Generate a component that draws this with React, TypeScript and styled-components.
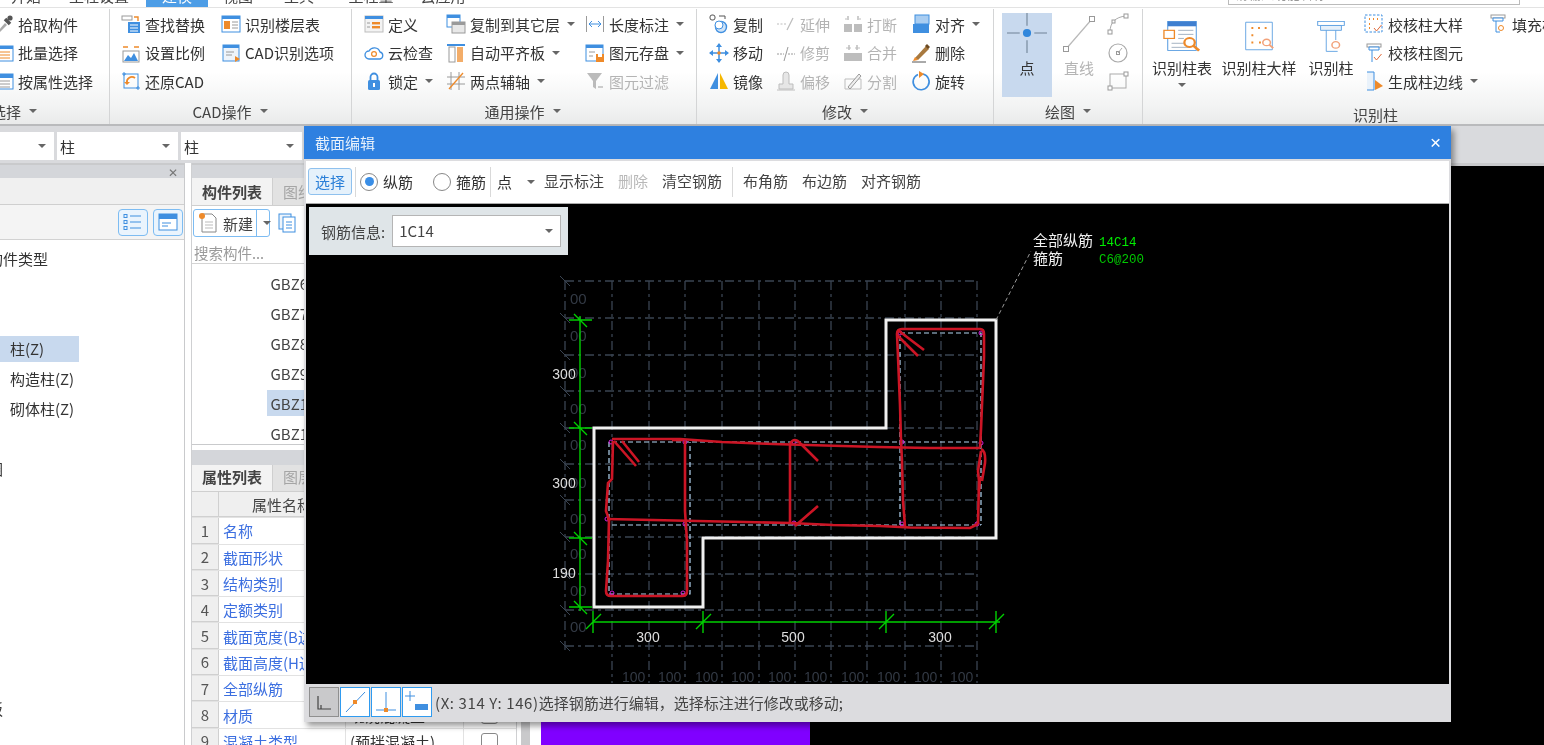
import React from "react";
import styled, { createGlobalStyle } from "styled-components";

const FONT = `"Noto Sans CJK SC", "Noto Sans", sans-serif`;

const Global = createGlobalStyle`
  html, body { margin: 0; padding: 0; background: #fff; }
  body { font-family: ${FONT}; color: #333; }
  * { box-sizing: border-box; }
`;

const Page = styled.div`
  position: relative;
  width: 1544px;
  height: 745px;
  overflow: hidden;
  display: flex;
  flex-direction: column;
  background: #fff;
  font-size: 15px;
  filter: blur(0.35px);
`;

/* ---------- top tab strip ---------- */
const TabStrip = styled.div`
  height: 7px;
  flex: none;
  display: flex;
  overflow: hidden;
  background: #fff;
  position: relative;
`;
const TopTab = styled.div<{ $active?: boolean; $w: number }>`
  width: ${(p) => p.$w}px;
  flex: none;
  text-align: center;
  height: 7px;
  background: ${(p) => (p.$active ? "#4d9de6" : "transparent")};
  color: ${(p) => (p.$active ? "#fff" : "#444")};
  span { display: block; line-height: 20px; margin-top: -14px; }
`;
const TopSearch = styled.div`
  margin-left: auto;
  margin-right: 24px;
  width: 292px;
  height: 5px;
  background: #fff;
  border: 1px solid #bbb;
  border-top: 0;
  color: #999;
  font-size: 13px;
  padding-left: 6px;
  span { display: block; line-height: 20px; margin-top: -16px; }
`;

/* ---------- ribbon ---------- */
const Ribbon = styled.div`
  height: 119px;
  flex: none;
  display: flex;
  background: linear-gradient(#ffffff 55%, #f2f3f3 85%, #e9eaea);
  border-top: 1px solid #e3e3e3;
  border-bottom: 2px solid #b9babc;
`;
const RibbonGroup = styled.div<{ $w: number; $pad: number; $offset?: number; $last?: boolean }>`
  width: ${(p) => p.$w}px;
  flex: none;
  margin-left: ${(p) => p.$offset ?? 0}px;
  padding-left: ${(p) => p.$pad}px;
  display: flex;
  flex-direction: column;
  border-right: ${(p) => (p.$last ? "0" : "1px solid #d4d5d6")};
  margin-top: 1px;
`;
const GroupBody = styled.div`
  height: 90px;
  display: flex;
  padding-top: 1px;
`;
const GroupLabel = styled.div<{ $down?: number; $nudge?: number; $start?: boolean }>`
  display: flex;
  align-items: center;
  justify-content: ${(p) => (p.$start ? "flex-start" : "center")};
  gap: 8px;
  height: 24px;
  margin-left: ${(p) => p.$nudge ?? -8}px;
  padding-top: ${(p) => p.$down ?? 0}px;
  color: #444;
`;
const Caret = styled.i<{ $muted?: boolean }>`
  display: inline-block;
  flex: none;
  width: 0;
  height: 0;
  border-left: 4px solid transparent;
  border-right: 4px solid transparent;
  border-top: 4px solid ${(p) => (p.$muted ? "#aaa" : "#666")};
`;
const Column = styled.div<{ $w: number; $left?: number }>`
  width: ${(p) => p.$w}px;
  flex: none;
  margin-left: ${(p) => p.$left ?? 0}px;
  display: flex;
  flex-direction: column;
`;
const Item = styled.div<{ $off?: boolean }>`
  height: 28.5px;
  display: flex;
  align-items: center;
  gap: 4px;
  white-space: nowrap;
  color: ${(p) => (p.$off ? "#b4b4b4" : "#333")};
  svg { flex: none; }
  ${Caret} { margin-left: 3px; }
`;
const BigButton = styled.div<{ $w: number; $on?: boolean; $off?: boolean; $left?: number }>`
  width: ${(p) => p.$w}px;
  flex: none;
  height: 84px;
  margin-top: 3px;
  margin-left: ${(p) => p.$left ?? 0}px;
  display: flex;
  flex-direction: column;
  align-items: center;
  background: ${(p) => (p.$on ? "#c8d9ee" : "transparent")};
  color: ${(p) => (p.$off ? "#b4b4b4" : "#333")};
  white-space: nowrap;
  padding-top: 3px;
  line-height: 22px;
  ${Caret} { margin-top: 4px; }
`;
const IconSlot = styled.div`
  height: 37px;
  margin-bottom: 4px;
  display: flex;
  align-items: flex-end;
  svg { flex: none; display: block; }
`;

/* ---------- selectors ---------- */
const SelectorRow = styled.div`
  height: 37px;
  flex: none;
  display: flex;
  gap: 3px;
  padding: 6px 0 3px;
  background: #d9dadd;
`;
const Select = styled.div<{ $w: number }>`
  width: ${(p) => p.$w}px;
  flex: none;
  background: #fff;
  display: flex;
  align-items: center;
  justify-content: space-between;
  padding: 0 8px 0 3px;
  color: #333;
`;

/* ---------- workspace ---------- */
const Workspace = styled.div`
  flex: 1;
  min-height: 0;
  display: flex;
`;
const LeftPanel = styled.div`
  width: 185px;
  flex: none;
  display: flex;
  flex-direction: column;
  border-right: 1px solid #c9cacc;
  border-top: 2px solid #c9cacc;
`;
const PanelHeader = styled.div<{ $h: number }>`
  height: ${(p) => p.$h}px;
  flex: none;
  background: #d4d6da;
  display: flex;
  align-items: center;
  justify-content: flex-end;
  padding-right: 6px;
  color: #777;
  font-size: 12px;
  line-height: 1;
`;
const LeftStrip = styled.div`
  height: 27px;
  flex: none;
  background: #f0f0f0;
  border-bottom: 1px solid #cfcfcf;
`;
const LeftTools = styled.div`
  height: 35px;
  flex: none;
  display: flex;
  align-items: center;
  justify-content: flex-end;
  gap: 5px;
  padding-right: 1px;
  background: #f4f4f4;
  border-bottom: 1px solid #d2d2d2;
`;
const SquareTool = styled.div`
  width: 30px;
  height: 27px;
  border: 1px solid #7dbcf2;
  border-radius: 4px;
  background: #eaf4fd;
  display: flex;
  align-items: center;
  justify-content: center;
`;
const Tree = styled.div`
  flex: 1;
  padding-top: 4px;
  background: #fff;
`;
const TreeRow = styled.div<{ $indent: number; $on?: boolean }>`
  height: ${(p) => (p.$on ? "26px" : "30px")};
  margin: ${(p) => (p.$on ? "2px 0" : "0")};
  width: ${(p) => (p.$on ? "79px" : "auto")};
  display: flex;
  align-items: center;
  padding-left: ${(p) => p.$indent}px;
  padding-bottom: 2px;
  white-space: nowrap;
  background: ${(p) => (p.$on ? "#c8d9ee" : "transparent")};
`;
const TreeRowClip = styled.span<{ $left: number }>`
  margin-left: ${(p) => p.$left}px;
`;
const MiddleColumn = styled.div`
  width: 326px;
  flex: none;
  margin-left: 6px;
  display: flex;
  flex-direction: column;
  border-left: 1px solid #cfd0d2;
  border-right: 1px solid #cfd0d2;
`;
const TopCard = styled.div`
  height: 282px;
  flex: none;
  display: flex;
  flex-direction: column;
  border-top: 2px solid #c9cacc;
  border-bottom: 1px solid #c9cacc;
`;
const BottomCard = styled.div`
  flex: 1;
  margin-top: 5px;
  display: flex;
  flex-direction: column;
  min-height: 0;
`;
const TabRow = styled.div<{ $h: number; $lift?: number }>`
  height: ${(p) => p.$h}px;
  flex: none;
  display: flex;
  background: #e8e8e8;
  border-bottom: 1px solid #cfcfcf;
  & > div { padding-bottom: ${(p) => p.$lift ?? 0}px; }
`;
const PanelTab = styled.div<{ $w: number; $on?: boolean }>`
  width: ${(p) => p.$w}px;
  flex: none;
  display: flex;
  align-items: center;
  padding-left: 10px;
  white-space: nowrap;
  overflow: hidden;
  font-weight: ${(p) => (p.$on ? 700 : 400)};
  color: ${(p) => (p.$on ? "#444" : "#a5a5a5")};
  background: ${(p) => (p.$on ? "#f3f3f3" : "#e2e2e2")};
  border-right: 1px solid #cfcfcf;
`;
const ListTools = styled.div`
  height: 34px;
  flex: none;
  display: flex;
  align-items: center;
  gap: 7px;
  padding-left: 1px;
`;
const NewButton = styled.div`
  width: 77px;
  height: 28px;
  flex: none;
  display: flex;
  align-items: center;
  gap: 4px;
  padding-left: 3px;
  border: 1px solid #7dbcf2;
  border-radius: 3px;
  background: #fff;
  color: #444;
  white-space: nowrap;
  svg { flex: none; }
  ${Caret} { margin-left: 2px; }
`;
const NewDivider = styled.span`
  width: 1px;
  height: 26px;
  flex: none;
  background: #7dbcf2;
  margin-left: -1px;
`;
const SearchLine = styled.div`
  height: 24px;
  flex: none;
  display: flex;
  align-items: center;
  padding-left: 2px;
  padding-top: 1px;
  color: #9a9a9a;
  font-size: 14.5px;
  border-bottom: 1px solid #d4d4d4;
`;
const ListBody = styled.div`
  flex: 1;
  padding-top: 4px;
  overflow: hidden;
`;
const ListRow = styled.div<{ $on?: boolean }>`
  height: ${(p) => (p.$on ? "26px" : "30px")};
  margin: ${(p) => (p.$on ? "2px 0 2px 75px" : "0 0 0 75px")};
  padding-left: 3.5px;
  display: flex;
  align-items: center;
  color: #444;
  background: ${(p) => (p.$on ? "#c8d9ee" : "transparent")};
`;
const TableRow = styled.div`
  height: 26.3px;
  flex: none;
  display: grid;
  grid-template-columns: 27px 127px 118px 51px 1fr;
  border-bottom: 1px solid #e2e2e2;
`;
const HeadCell = styled.div`
  background: #efefef;
  border-right: 1px solid #d0d0d0;
  border-bottom: 1px solid #d0d0d0;
  display: flex;
  align-items: center;
  justify-content: center;
  color: #444;
`;
const NumCell = styled(HeadCell)`
  color: #555;
`;
const NameCell = styled.div`
  display: flex;
  align-items: center;
  padding-left: 4px;
  color: #3c6fe0;
  white-space: nowrap;
  border-right: 1px solid #e2e2e2;
`;
const ValueCell = styled.div`
  display: flex;
  align-items: center;
  padding-left: 4px;
  white-space: nowrap;
  color: #333;
  border-right: 1px solid #e2e2e2;
`;
const CheckCell = styled.div`
  display: flex;
  align-items: center;
  justify-content: center;
`;
const CheckBox = styled.span`
  width: 17px;
  height: 17px;
  border: 1px solid #888;
  border-radius: 3px;
  background: #fff;
`;
const ScrollTrack = styled.div`
  width: 9px;
  flex: none;
  margin-left: 4px;
  background: #c9c9cb;
`;
const MainCanvas = styled.div`
  flex: 1;
  margin-left: 11px;
  background: #000;
  position: relative;
  border-top: 3px solid #c9cacc;
`;
const PurpleShape = styled.div`
  position: absolute;
  left: 0;
  bottom: 0;
  width: 269px;
  height: 60px;
  background: #8000ff;
`;

/* ---------- dialog ---------- */
const Dialog = styled.div`
  position: absolute;
  left: 304px;
  top: 126px;
  width: 1147px;
  height: 596px;
  background: #dcdcdf;
  display: flex;
  flex-direction: column;
  box-shadow: 3px 4px 6px rgba(0, 0, 0, 0.4);
`;
const TitleBar = styled.div`
  height: 33px;
  flex: none;
  background: #2e80e0;
  color: #e8f1fb;
  display: flex;
  align-items: center;
  justify-content: space-between;
  padding: 0 10px 0 11px;
`;
const CloseGlyph = styled.span`
  font-size: 19px;
  color: #fff;
  line-height: 1;
  font-family: "Liberation Sans", sans-serif;
`;
const DialogBody = styled.div`
  flex: 1;
  min-height: 0;
  display: flex;
  flex-direction: column;
  margin: 2px 2px 0 2px;
`;
const ToolBar = styled.div`
  height: 43px;
  flex: none;
  background: #fff;
  display: flex;
  align-items: center;
  padding-left: 2px;
  padding-bottom: 1px;
  gap: 4px;
  white-space: nowrap;
  border-bottom: 1px solid #aaa;
`;
const PickButton = styled.div`
  width: 44px;
  height: 27px;
  display: flex;
  align-items: center;
  justify-content: center;
  padding-bottom: 1px;
  background: #e5f1fb;
  border: 1px solid #8fc1ee;
  border-radius: 3px;
  color: #2a7fd8;
  margin-right: -1px;
`;
const BarSep = styled.span<{ $m?: number }>`
  width: 1px;
  height: 30px;
  background: #d9d9d9;
  margin: 0 ${(p) => p.$m ?? 0}px;
`;
const RadioRow = styled.label<{ $right: number }>`
  display: flex;
  align-items: center;
  gap: 5px;
  margin-right: ${(p) => p.$right}px;
`;
const RadioDot = styled.span<{ $on?: boolean }>`
  width: 18px;
  height: 18px;
  border-radius: 50%;
  border: 1px solid #888;
  background: #fff;
  display: flex;
  align-items: center;
  justify-content: center;
  &::after {
    content: "";
    width: 9px;
    height: 9px;
    border-radius: 50%;
    background: ${(p) => (p.$on ? "#3a8ee6" : "transparent")};
  }
`;
const PointSelect = styled.div`
  width: 40px;
  display: flex;
  align-items: center;
  justify-content: space-between;
  padding: 0 0 0 2px;
`;
const ToolButton = styled.div<{ $off?: boolean }>`
  padding: 0 5px;
  height: 27px;
  line-height: 25px;
  color: ${(p) => (p.$off ? "#b8b8b8" : "#444")};
`;
const CanvasArea = styled.div`
  flex: 1;
  min-height: 0;
  position: relative;
  background: #000;
  svg { display: block; }
`;
const RebarInfo = styled.div`
  position: absolute;
  left: 3px;
  top: 3px;
  width: 259px;
  height: 48px;
  background: #dfe5e8;
  display: flex;
  align-items: center;
  gap: 7px;
  padding-left: 12px;
  color: #444;
`;
const RebarSelect = styled.div`
  width: 169px;
  height: 32px;
  background: #fff;
  border: 1px solid #b5b5b5;
  display: flex;
  align-items: center;
  justify-content: space-between;
  padding: 0 7px 1px 6px;
  color: #444;
`;
const StatusBar = styled.div`
  height: 38px;
  flex: none;
  display: flex;
  align-items: center;
  padding: 0 0 2px 3px;
  gap: 1px;
  background: #dcdcdf;
  color: #444;
  white-space: nowrap;
`;
const SnapButton = styled.div<{ $pressed?: boolean }>`
  width: 30px;
  height: 30px;
  display: flex;
  align-items: center;
  justify-content: center;
  background: ${(p) => (p.$pressed ? "#c9c9cb" : "#fff")};
  border: 1px solid ${(p) => (p.$pressed ? "#8f8f8f" : "#2f9bf0")};
`;
const StatusText = styled.span`
  margin-left: 2px;
`;
const CoordText = styled.span`
  letter-spacing: 0.6px;
`;

/* ---------- icons ---------- */
const B = "#3f8fe0";
const O = "#ee8a2a";
const G = "#9a9a9a";
const L = "#bdbdbd";

const icons: Record<string, React.ReactNode> = {
  pick: (<><path d="M3 18 L11 9 L13 11 L5 19 Z" fill="#aaa" /><path d="M11 5 L16 10" stroke="#555" strokeWidth="3.5" /><circle cx="16" cy="4" r="2.6" fill="#555" /></>),
  batch: (<><rect x="2" y="3" width="17" height="15" fill="#fff" stroke={B} /><rect x="2" y="3" width="17" height="3" fill={B} /><path d="M5 9h11M5 12h11M5 15h11" stroke={O} /></>),
  attr: (<><rect x="2" y="3" width="17" height="15" fill="#fff" stroke={B} /><rect x="2" y="3" width="17" height="4" fill={B} /><path d="M5 10h11M5 13h11M5 16h11" stroke={G} /></>),
  find: (<><rect x="1" y="2" width="10" height="4" fill="#fff" stroke={G} /><path d="M13 3h4v4" stroke={O} fill="none" strokeWidth="1.4" /><rect x="7" y="8" width="12" height="11" fill={B} /><path d="M9 11h8M9 14h8M9 17h8" stroke="#fff" /></>),
  floor: (<><rect x="1" y="2" width="18" height="16" fill="#fff" stroke={B} /><rect x="1" y="2" width="18" height="3" fill={B} /><rect x="3" y="7" width="6" height="8" fill={O} /><path d="M11 8h6M11 11h6M11 14h6" stroke={G} /></>),
  scale: (<><path d="M2 4h5M13 4h5" stroke={O} strokeWidth="1.4" /><rect x="2" y="8" width="16" height="11" fill="#fff" stroke={G} /><path d="M3 18l4-6 3 3 3-5 4 8Z" fill={B} /></>),
  cadopt: (<><rect x="2" y="2" width="16" height="16" fill="#eef4fb" stroke={B} /><rect x="2" y="2" width="16" height="3" fill={B} /><path d="M14 13l5 3-5 3Z" fill={O} /><path d="M5 9h8M5 12h6" stroke={G} /></>),
  restore: (<><rect x="3" y="3" width="14" height="14" fill="none" stroke={B} /><path d="M1 3h4M3 1v4M15 17h4M17 15v4" stroke={B} /><path d="M14 7a5 5 0 0 0-8 5" fill="none" stroke={O} strokeWidth="1.8" /><path d="M3 11l3 3 3-3Z" fill={O} /></>),
  define: (<><rect x="1" y="2" width="18" height="16" fill="#f3f3f3" stroke={L} /><rect x="1" y="2" width="18" height="3" fill={B} /><rect x="8" y="8" width="8" height="2.4" fill={O} /><rect x="8" y="12" width="8" height="2.4" fill={O} /><path d="M3 9h3M3 13h3" stroke={G} /></>),
  cloud: (<><path d="M5 16a4 4 0 0 1 0-8 6 6 0 0 1 11 1 3.6 3.6 0 0 1 0 7Z" fill="#fff" stroke={B} strokeWidth="1.3" /><circle cx="10" cy="11" r="2.4" fill="none" stroke={O} strokeWidth="1.2" /></>),
  lock: (<><path d="M6.5 9V6a3.5 3.5 0 0 1 7 0v3" fill="none" stroke={B} strokeWidth="1.8" /><rect x="4" y="9" width="12" height="10" rx="1.5" fill={B} /><rect x="9" y="12" width="2" height="4" fill="#fff" /></>),
  copy: (<><rect x="1" y="1" width="13" height="12" fill="#fff" stroke={B} /><rect x="1" y="1" width="13" height="3" fill={B} /><rect x="6" y="8" width="13" height="11" fill="#e8e8e8" stroke={G} /><rect x="6" y="8" width="13" height="3" fill={G} /></>),
  autoalign: (<><path d="M1 2h18" stroke={B} strokeWidth="2" /><rect x="3" y="4" width="6" height="15" fill="#fff" stroke={G} /><rect x="11" y="4" width="6" height="15" fill={O} opacity=".7" /></>),
  twopt: (<><path d="M5 1v18M13 1v18M1 6h18M1 13h18" stroke={G} /><path d="M3 18L17 2" stroke={O} strokeWidth="1.4" /></>),
  dim: (<><path d="M1.5 2v16M18.5 2v16" stroke={G} /><path d="M4 10h12M4 10l3-3M4 10l3 3M16 10l-3-3M16 10l-3 3" stroke={B} fill="none" /></>),
  save: (<><rect x="1" y="2" width="17" height="16" fill="#fff" stroke={B} /><rect x="1" y="2" width="17" height="3" fill={B} /><path d="M4 9h6M4 13h4" stroke={G} /><rect x="11" y="11" width="8" height="8" fill={O} /><rect x="13" y="11" width="4" height="3" fill="#fff" /></>),
  filter: (<><path d="M2 2h15l-6 8v8l-3-2v-6Z" fill="#bbb" /><rect x="13" y="15" width="5" height="2" fill="#ccc" /></>),
  dup: (<><rect x="1" y="1" width="5" height="5" rx="2" fill="#fff" stroke="#555" /><path d="M10 2h6v3" stroke="#555" fill="none" /><circle cx="12" cy="13" r="5.5" fill="#cfe3f7" stroke={B} strokeWidth="1.4" /><circle cx="10" cy="11" r="4" fill="#fff" stroke={B} /></>),
  move: (<><path d="M10 1v18M1 10h18" stroke={B} strokeWidth="1.5" /><path d="M10 0l3 4H7ZM10 20l3-4H7ZM0 10l4-3v6ZM20 10l-4-3v6Z" fill={B} /><circle cx="10" cy="10" r="1.8" fill={O} /></>),
  mirror: (<><path d="M9 2v16H1Z" fill={B} /><path d="M11 2v16h8Z" fill="#f5b700" /></>),
  extend: (<><path d="M1 10h9" stroke={L} strokeDasharray="2 1.5" /><path d="M11 16L17 4" stroke={L} strokeWidth="1.3" /></>),
  trim: (<><path d="M1 11h7M12 11h7" stroke={G} strokeDasharray="2 1" /><path d="M8 18L12 4" stroke={G} /></>),
  offset: (<><path d="M3 18v-5h4V4a3 3 0 0 1 6 0v9h4v5Z" fill="#e6e6e6" stroke={L} /><path d="M1 19h18" stroke={L} /></>),
  brk: (<><path d="M5 2v4M15 2v4" stroke={L} strokeWidth="1.5" /><path d="M2 5l2 0M16 5l2 0" stroke={L} /><rect x="1" y="10" width="8" height="8" fill={L} /><rect x="11" y="10" width="8" height="8" fill={L} /></>),
  merge: (<><path d="M6 2v5M14 2v5" stroke={L} strokeWidth="1.5" /><path d="M3 5h5M12 5h5" stroke={L} /><rect x="1" y="10" width="18" height="8" fill={L} /></>),
  split: (<><path d="M2 18V8h16v10Z" fill="none" stroke={L} /><path d="M5 16L16 3l2 2L7 18Z" fill="#eee" stroke={G} /></>),
  align: (<><rect x="4" y="1" width="14" height="9" fill="#a9cdf1" stroke={B} /><rect x="2" y="10" width="16" height="9" fill={B} /></>),
  del: (<><path d="M4 15L15 3l3 3L7 17Z" fill="#a8793f" /><path d="M14 3l2-2 3 3-2 2Z" fill="#6d4a22" /><path d="M2 18l2-4 3 3Z" fill={O} /><path d="M1 19h14" stroke="#555" /></>),
  rotate: (<><path d="M12 3a8 8 0 1 1-5 .4" fill="none" stroke={B} strokeWidth="1.6" /><path d="M8 0l5 3-5 4Z" fill={O} /></>),
  fill: (<><rect x="3" y="1" width="14" height="3" fill="#fff" stroke={G} /><path d="M5 4h10v3H5Z" fill="#fff" stroke={B} /><path d="M8 7v11h4" fill="none" stroke={B} /><circle cx="13" cy="14" r="2.5" fill="none" stroke={O} /></>),
  check1: (<><rect x="1" y="1" width="17" height="17" fill="none" stroke={B} strokeDasharray="2.5 1.5" /><path d="M5 5h1M9 5h1M13 5h1M5 10h1M5 14h1" stroke={O} strokeWidth="2" /><path d="M10 14l2.5 3 5-6" fill="none" stroke="#e06a3a" /></>),
  check2: (<><rect x="3" y="1" width="14" height="3" fill="#fff" stroke={G} /><path d="M5 4h10v3H5Z" fill="#fff" stroke={B} /><path d="M8 7v12" stroke={B} /><path d="M10 14l2.5 3 5-6" fill="none" stroke="#e06a3a" /></>),
  gen: (<><path d="M3 1h7v18H3" fill="#e9f2fb" stroke={B} /><path d="M11 9l8 6-8 4Z" fill={O} /></>),
};

const Ico = ({ n, s = 20 }: { n: string; s?: number }) => (
  <svg width={s} height={s} viewBox="0 0 20 20">{icons[n]}</svg>
);

const PointIcon = () => (
  <svg width="40" height="40" viewBox="0 0 44 44">
    <path d="M22 0v14M22 30v14M0 22h14M30 22h14" stroke="#6f8296" strokeWidth="1.2" />
    <circle cx="22" cy="22" r="4.5" fill="#2f86dc" />
  </svg>
);
const LineIcon = () => (
  <svg width="34" height="38" viewBox="0 0 34 38">
    <path d="M4 34L30 4" stroke="#b9b9b9" strokeWidth="1.2" />
    <rect x="1.5" y="31.5" width="5" height="5" fill="#fff" stroke="#999" />
    <rect x="27.5" y="1.5" width="5" height="5" fill="#fff" stroke="#999" />
  </svg>
);
const ArcIcon = () => (
  <svg width="22" height="22" viewBox="0 0 22 22">
    <path d="M3 19C3 10 8 4 19 3" fill="none" stroke="#aaa" />
    <rect x="1" y="17" width="4" height="4" fill="#fff" stroke="#999" />
    <rect x="17" y="1" width="4" height="4" fill="#fff" stroke="#999" />
    <rect x="5" y="7" width="3" height="3" fill="#fff" stroke="#999" />
  </svg>
);
const CircleIcon = () => (
  <svg width="22" height="22" viewBox="0 0 22 22">
    <circle cx="11" cy="11" r="9" fill="none" stroke="#aaa" strokeWidth="1.2" />
    <rect x="9.5" y="9.5" width="3" height="3" fill="#fff" stroke="#999" />
    <path d="M11 11l4-5" stroke="#aaa" />
  </svg>
);
const RectIcon = () => (
  <svg width="22" height="22" viewBox="0 0 22 22">
    <rect x="3" y="4" width="16" height="14" fill="none" stroke="#aaa" />
    <rect x="1" y="16" width="4" height="4" fill="#fff" stroke="#999" />
    <rect x="17" y="2" width="4" height="4" fill="#fff" stroke="#999" />
  </svg>
);
const TableBig = () => (
  <svg width="38" height="34" viewBox="0 0 40 42" preserveAspectRatio="none">
    <rect x="5" y="3" width="30" height="36" fill="#fff" stroke="#4a94de" />
    <rect x="5" y="3" width="30" height="6" fill="#3f7fd0" />
    <path d="M16 14h16M16 19h16M16 24h6M9 30h13M9 35h20" stroke="#9ab" />
    <rect x="1" y="14" width="11" height="10" fill="#fff" stroke="#ee8a2a" strokeWidth="1.4" />
    <circle cx="28" cy="29" r="5.5" fill="none" stroke="#ee8a2a" strokeWidth="2.4" />
    <path d="M32 33l6 6" stroke="#ee8a2a" strokeWidth="3" />
  </svg>
);
const DetailBig = () => (
  <svg width="38" height="34" viewBox="0 0 40 42" preserveAspectRatio="none">
    <path d="M6 4h28v34H6Z" fill="#fff" stroke="#5a9ee0" />
    <path d="M12 11h2M19 11h2M26 11h2M12 20h2M12 29h2M20 29h2" stroke="#ee8a2a" strokeWidth="2.4" />
    <circle cx="28" cy="29" r="4" fill="none" stroke="#f2a27a" strokeWidth="1.6" />
    <path d="M31 32l4 4" stroke="#f2a27a" strokeWidth="2" />
  </svg>
);
const ColumnBig = () => (
  <svg width="38" height="34" viewBox="0 0 40 42" preserveAspectRatio="none">
    <rect x="6" y="3" width="28" height="5" fill="#fff" stroke="#5a9ee0" />
    <path d="M9 8h22v6H9Z" fill="#e6f0fa" stroke="#5a9ee0" />
    <path d="M15 14v26h12" fill="none" stroke="#5a9ee0" />
    <path d="M25 14v12" stroke="#5a9ee0" />
    <circle cx="25" cy="32" r="4" fill="none" stroke="#f2a27a" strokeWidth="1.6" />
  </svg>
);

/* ---------- canvas drawing, in screen coordinates ---------- */
const gridH = [280, 317, 354, 390, 427, 463, 499, 536, 573, 609, 645];
const gridV = [612, 649, 685, 722, 759, 795, 831, 867, 905, 941, 977];
const sideLabels = [298, 335, 372, 408, 444, 482, 518, 553, 590, 626];
const bottomLabels = [633, 669, 706, 742, 779, 815, 852, 888, 925, 961];
const corners: [number, number][] = [
  [611, 441], [685, 441], [794, 441], [902, 441], [981, 442], [607, 518], [685, 523],
  [794, 522], [902, 523], [977, 523], [612, 592], [683, 592], [900, 332], [981, 332],
];
const redPaths = [
  "M897 333Q897 328 902 328H980Q984 328 984 333L984 356L983 380L982 404L981 428L980 447",
  "M897 333L898 356L899 380L900 404L901 440L902 460L903 500L905 525",
  "M899 330L924 349M897 334L918 355",
  "M612 438H680L722 441L773 443L825 444.5L878 446L929 447H980",
  "M672 439H683",
  "M607 518L653 519L697 520L745 521L790 522L833 524L880 525L910 526.5L970 527L978 523",
  "M613 440L612 478L608 482L606 510L609 518L608 560L606 590Q606 595 611 595H682Q687 595 687 590L687 540L685 510V440",
  "M614 440L636 465M622 440L639 461",
  "M790 522V443Q794 435 801 443L818 460M795 525L818 505",
  "M978 523L979 480L978 470L981 450M981 448Q986 450 985 462L982 480",
  "M979 490L980 476",
];
const dimTicksY = [319, 427, 537, 606];
const dimTicksX = [593, 703, 886, 996];

const SectionDrawing = () => (
  <svg width="1143" height="479" viewBox="306 203 1143 479">
    <g stroke="#3a4452" strokeWidth="1.3" strokeDasharray="9 4 3 4" fill="none">
      {gridH.map((y) => <path key={y} d={`M565 ${y}H977`} />)}
      <path d="M565 280V650" />
      {gridV.map((x) => <path key={x} d={`M${x} 280V682`} />)}
    </g>
    <g stroke="#3a4452" strokeWidth="1">
      {gridH.map((y) => <path key={y} d={`M560 ${y - 5}L570 ${y + 5}`} />)}
    </g>
    <g fill="#333a45" fontFamily="Liberation Sans, sans-serif" fontSize="15">
      {sideLabels.map((y) => <text key={y} x="570" y={y + 5}>00</text>)}
      {bottomLabels.map((x) => <text key={x} x={x - 11} y="681" fontSize="14">100</text>)}
    </g>
    <path d="M886 319H996V537H703V606H594V427H886Z" fill="none" stroke="#f0f0f0" strokeWidth="3" />
    <path d="M996 319L1031 250" stroke="#9a9a9a" strokeWidth="1" strokeDasharray="4 3" />
    <g fill="none" stroke="#b4d6f2" strokeWidth="1.2" strokeDasharray="5 3">
      <path d="M900 524V332H981V524" />
      <path d="M612 441H981" />
      <path d="M612 524H981" />
      <path d="M609 441V593H690V441" />
    </g>
    <g fill="none" stroke="#d81ee0" strokeWidth="1">
      {corners.map(([x, y]) => <circle key={`${x}-${y}`} cx={x} cy={y} r="2" />)}
    </g>
    <g fill="none" stroke="#cc1525" strokeWidth="2.6">
      {redPaths.map((d) => <path key={d} d={d} />)}
    </g>
    <g stroke="#00d000" strokeWidth="1.4" fill="none">
      <path d="M580 315V610M593 621H1000" />
      {dimTicksY.map((y) => <path key={y} d={`M569 ${y}H592M574 ${y - 6}L587 ${y + 7}`} />)}
      {dimTicksX.map((x) => <path key={x} d={`M${x} 610V632M${x - 7} 628L${x + 8} 613`} />)}
    </g>
    <g fill="#dddddd" fontFamily="Liberation Sans, sans-serif" fontSize="14" textAnchor="middle">
      <text x="564" y="378">300</text>
      <text x="564" y="487">300</text>
      <text x="564" y="577">190</text>
      <text x="648" y="641">300</text>
      <text x="793" y="641">500</text>
      <text x="940" y="641">300</text>
    </g>
    <g fill="#f0f0f0" fontFamily={FONT} fontSize="15">
      <text x="1033" y="245">全部纵筋</text>
      <text x="1033" y="263">箍筋</text>
    </g>
    <g fontFamily="Liberation Mono, monospace" fontSize="12.5">
      <text x="1099" y="245" fill="#00ee00">14C14</text>
      <text x="1099" y="262" fill="#00c800">C6@200</text>
    </g>
  </svg>
);

const snapIcons = [
  <path key="a" d="M7 7v13h13M10 16v4" fill="none" stroke="#444" strokeWidth="1.2" />,
  <g key="b"><path d="M4 23L23 3" stroke="#3f8fe0" /><rect x="11" y="11" width="4" height="4" fill="#ee8a2a" /></g>,
  <g key="c"><path d="M13 3v18M3 21h20" stroke="#3f8fe0" /><rect x="11" y="19" width="4" height="4" fill="#ee8a2a" /></g>,
  <g key="d"><path d="M6 2v10M1 7h10" stroke="#3f8fe0" /><rect x="11" y="15" width="13" height="6" fill="#3f8fe0" /></g>,
];

const tables = [
  ["1", "名称"], ["2", "截面形状"], ["3", "结构类别"], ["4", "定额类别"],
  ["5", "截面宽度(B边)"], ["6", "截面高度(H边)"], ["7", "全部纵筋"], ["8", "材质"], ["9", "混凝土类型"],
];

const Entry = ({ i, t, off, caret }: { i: string; t: string; off?: boolean; caret?: boolean }) => (
  <Item $off={off}><Ico n={i} />{t}{caret && <Caret />}</Item>
);

export default function App() {
  return (
    <Page>
      <Global />
      <TabStrip>
        <TopTab $w={52}><span>开始</span></TopTab>
        <TopTab $w={94}><span>工程设置</span></TopTab>
        <TopTab $w={62} $active><span>建模</span></TopTab>
        <TopTab $w={60}><span>视图</span></TopTab>
        <TopTab $w={62}><span>工具</span></TopTab>
        <TopTab $w={82}><span>工程量</span></TopTab>
        <TopTab $w={62}><span>云应用</span></TopTab>
        <TopSearch><span>请输入功能名称</span></TopSearch>
      </TabStrip>

      <Ribbon>
        <RibbonGroup $w={116} $pad={0} $offset={-6}>
          <GroupBody>
            <Column $w={110}>
              <Entry i="pick" t="拾取构件" />
              <Entry i="batch" t="批量选择" />
              <Entry i="attr" t="按属性选择" />
            </Column>
          </GroupBody>
          <GroupLabel $start $nudge={-3}>选择<Caret /></GroupLabel>
        </RibbonGroup>
        <RibbonGroup $w={242} $pad={11}>
          <GroupBody>
            <Column $w={100}>
              <Entry i="find" t="查找替换" />
              <Entry i="scale" t="设置比例" />
              <Entry i="restore" t="还原CAD" />
            </Column>
            <Column $w={120}>
              <Entry i="floor" t="识别楼层表" />
              <Entry i="cadopt" t="CAD识别选项" />
            </Column>
          </GroupBody>
          <GroupLabel $nudge={-12}>CAD操作<Caret /></GroupLabel>
        </RibbonGroup>
        <RibbonGroup $w={345} $pad={12}>
          <GroupBody>
            <Column $w={82}>
              <Entry i="define" t="定义" />
              <Entry i="cloud" t="云检查" />
              <Entry i="lock" t="锁定" caret />
            </Column>
            <Column $w={139}>
              <Entry i="copy" t="复制到其它层" caret />
              <Entry i="autoalign" t="自动平齐板" caret />
              <Entry i="twopt" t="两点辅轴" caret />
            </Column>
            <Column $w={105}>
              <Entry i="dim" t="长度标注" caret />
              <Entry i="save" t="图元存盘" caret />
              <Entry i="filter" t="图元过滤" off />
            </Column>
          </GroupBody>
          <GroupLabel $nudge={-15}>通用操作<Caret /></GroupLabel>
        </RibbonGroup>
        <RibbonGroup $w={297} $pad={12}>
          <GroupBody>
            <Column $w={67}>
              <Entry i="dup" t="复制" />
              <Entry i="move" t="移动" />
              <Entry i="mirror" t="镜像" />
            </Column>
            <Column $w={67}>
              <Entry i="extend" t="延伸" off />
              <Entry i="trim" t="修剪" off />
              <Entry i="offset" t="偏移" off />
            </Column>
            <Column $w={68}>
              <Entry i="brk" t="打断" off />
              <Entry i="merge" t="合并" off />
              <Entry i="split" t="分割" off />
            </Column>
            <Column $w={75}>
              <Entry i="align" t="对齐" caret />
              <Entry i="del" t="删除" />
              <Entry i="rotate" t="旋转" />
            </Column>
          </GroupBody>
          <GroupLabel $nudge={-12}>修改<Caret /></GroupLabel>
        </RibbonGroup>
        <RibbonGroup $w={149} $pad={8}>
          <GroupBody>
            <BigButton $w={50} $on>
              <IconSlot><PointIcon /></IconSlot>
              点
            </BigButton>
            <BigButton $w={54} $off>
              <IconSlot><LineIcon /></IconSlot>
              直线
            </BigButton>
            <Column $w={30} $left={1}>
              <Item><ArcIcon /></Item>
              <Item><CircleIcon /></Item>
              <Item><RectIcon /></Item>
            </Column>
          </GroupBody>
          <GroupLabel>绘图<Caret /></GroupLabel>
        </RibbonGroup>
        <RibbonGroup $w={420} $pad={8} $last>
          <GroupBody>
            <BigButton $w={62}>
              <IconSlot><TableBig /></IconSlot>
              识别柱表
              <Caret />
            </BigButton>
            <BigButton $w={80} $left={6}>
              <IconSlot><DetailBig /></IconSlot>
              识别柱大样
            </BigButton>
            <BigButton $w={62} $left={1}>
              <IconSlot><ColumnBig /></IconSlot>
              识别柱
            </BigButton>
            <Column $w={122} $left={2}>
              <Entry i="check1" t="校核柱大样" />
              <Entry i="check2" t="校核柱图元" />
              <Entry i="gen" t="生成柱边线" caret />
            </Column>
            <Column $w={60} $left={2}>
              <Entry i="fill" t="填充柱" />
            </Column>
          </GroupBody>
          <GroupLabel $down={6} $start $nudge={202}>识别柱</GroupLabel>
        </RibbonGroup>
      </Ribbon>

      <SelectorRow>
        <Select $w={54}><span /><Caret /></Select>
        <Select $w={121}>柱<Caret /></Select>
        <Select $w={121}>柱<Caret /></Select>
      </SelectorRow>

      <Workspace>
        <LeftPanel>
          <PanelHeader $h={13}>✕</PanelHeader>
          <LeftStrip />
          <LeftTools>
            <SquareTool>
              <svg width="20" height="18" viewBox="0 0 20 18">
                <path d="M7 3h11M7 9h11M7 15h11" stroke="#3f8fe0" strokeWidth="1.2" />
                <rect x="1" y="1.5" width="3" height="3" fill="none" stroke="#3f8fe0" />
                <rect x="1" y="7.5" width="3" height="3" fill="none" stroke="#3f8fe0" />
                <rect x="1" y="13.5" width="3" height="3" fill="none" stroke="#3f8fe0" />
              </svg>
            </SquareTool>
            <SquareTool>
              <svg width="20" height="18" viewBox="0 0 20 18">
                <rect x="1" y="1" width="18" height="16" fill="#fff" stroke="#3f8fe0" />
                <rect x="1" y="1" width="18" height="5" fill="#3f8fe0" />
                <path d="M4 10h9M4 13h6" stroke="#3f8fe0" />
              </svg>
            </SquareTool>
          </LeftTools>
          <Tree>
            <TreeRow $indent={0}><TreeRowClip $left={-12}>构件类型</TreeRowClip></TreeRow>
            <TreeRow $indent={0} />
            <TreeRow $indent={0} />
            <TreeRow $indent={10} $on>柱(Z)</TreeRow>
            <TreeRow $indent={10}>构造柱(Z)</TreeRow>
            <TreeRow $indent={10}>砌体柱(Z)</TreeRow>
            <TreeRow $indent={0} />
            <TreeRow $indent={0}><TreeRowClip $left={-12}>圈</TreeRowClip></TreeRow>
            <TreeRow $indent={0} />
            <TreeRow $indent={0} />
            <TreeRow $indent={0} />
            <TreeRow $indent={0} />
            <TreeRow $indent={0} />
            <TreeRow $indent={0} />
            <TreeRow $indent={0} />
            <TreeRow $indent={0}><TreeRowClip $left={-12}>板</TreeRowClip></TreeRow>
          </Tree>
        </LeftPanel>

        <MiddleColumn>
          <TopCard>
            <PanelHeader $h={13} />
            <TabRow $h={28}>
              <PanelTab $w={81} $on>构件列表</PanelTab>
              <PanelTab $w={80}>图纸管理</PanelTab>
            </TabRow>
            <ListTools>
              <NewButton>
                <svg width="22" height="22" viewBox="0 0 22 22">
                  <path d="M5 2h10l4 4v14H5Z" fill="#fff" stroke="#888" />
                  <path d="M8 10h8M8 13h8M8 16h8" stroke="#bbb" />
                  <circle cx="5" cy="4" r="3" fill="#ee8a2a" />
                </svg>
                新建
                <NewDivider />
                <Caret />
              </NewButton>
              <svg width="20" height="22" viewBox="0 0 20 22">
                <rect x="2" y="2" width="12" height="15" fill="#eef4fb" stroke="#3f8fe0" />
                <rect x="6" y="5" width="12" height="15" fill="#fff" stroke="#3f8fe0" />
                <path d="M9 10h6M9 13h6M9 16h6" stroke="#3f8fe0" />
              </svg>
            </ListTools>
            <SearchLine>搜索构件...</SearchLine>
            <ListBody>
              <ListRow>GBZ6</ListRow>
              <ListRow>GBZ7</ListRow>
              <ListRow>GBZ8</ListRow>
              <ListRow>GBZ9</ListRow>
              <ListRow $on>GBZ10</ListRow>
              <ListRow>GBZ11</ListRow>
            </ListBody>
          </TopCard>
          <BottomCard>
            <PanelHeader $h={15} />
            <TabRow $h={27} $lift={3}>
              <PanelTab $w={81} $on>属性列表</PanelTab>
              <PanelTab $w={80}>图层管理</PanelTab>
            </TabRow>
            <TableRow>
              <HeadCell />
              <HeadCell>属性名称</HeadCell>
              <HeadCell>属性值</HeadCell>
              <HeadCell>附加</HeadCell>
              <span />
            </TableRow>
            {tables.map(([n, name]) => (
              <TableRow key={n}>
                <NumCell>{n}</NumCell>
                <NameCell>{name}</NameCell>
                <ValueCell>{n === "8" ? "现浇混凝土" : n === "9" ? "(预拌混凝土)" : ""}</ValueCell>
                <CheckCell><CheckBox /></CheckCell>
                <span />
              </TableRow>
            ))}
          </BottomCard>
        </MiddleColumn>
        <ScrollTrack />
        <MainCanvas><PurpleShape /></MainCanvas>
      </Workspace>

      <Dialog>
        <TitleBar>截面编辑<CloseGlyph>×</CloseGlyph></TitleBar>
        <DialogBody>
          <ToolBar>
            <PickButton>选择</PickButton>
            <BarSep />
            <RadioRow $right={16}><RadioDot $on />纵筋</RadioRow>
            <RadioRow $right={0}><RadioDot />箍筋</RadioRow>
            <BarSep />
            <PointSelect>点<Caret /></PointSelect>
            <ToolButton>显示标注</ToolButton>
            <ToolButton $off>删除</ToolButton>
            <ToolButton>清空钢筋</ToolButton>
            <BarSep $m={1} />
            <ToolButton>布角筋</ToolButton>
            <ToolButton>布边筋</ToolButton>
            <ToolButton>对齐钢筋</ToolButton>
          </ToolBar>
          <CanvasArea>
            <SectionDrawing />
            <RebarInfo>
              钢筋信息:
              <RebarSelect>1C14<Caret /></RebarSelect>
            </RebarInfo>
          </CanvasArea>
          <StatusBar>
            {snapIcons.map((g, i) => (
              <SnapButton key={i} $pressed={i === 0}>
                <svg width="26" height="26" viewBox="0 0 26 26">{g}</svg>
              </SnapButton>
            ))}
            <StatusText><CoordText>(X: 314 Y: 146)</CoordText>选择钢筋进行编辑，选择标注进行修改或移动;</StatusText>
          </StatusBar>
        </DialogBody>
      </Dialog>
    </Page>
  );
}
